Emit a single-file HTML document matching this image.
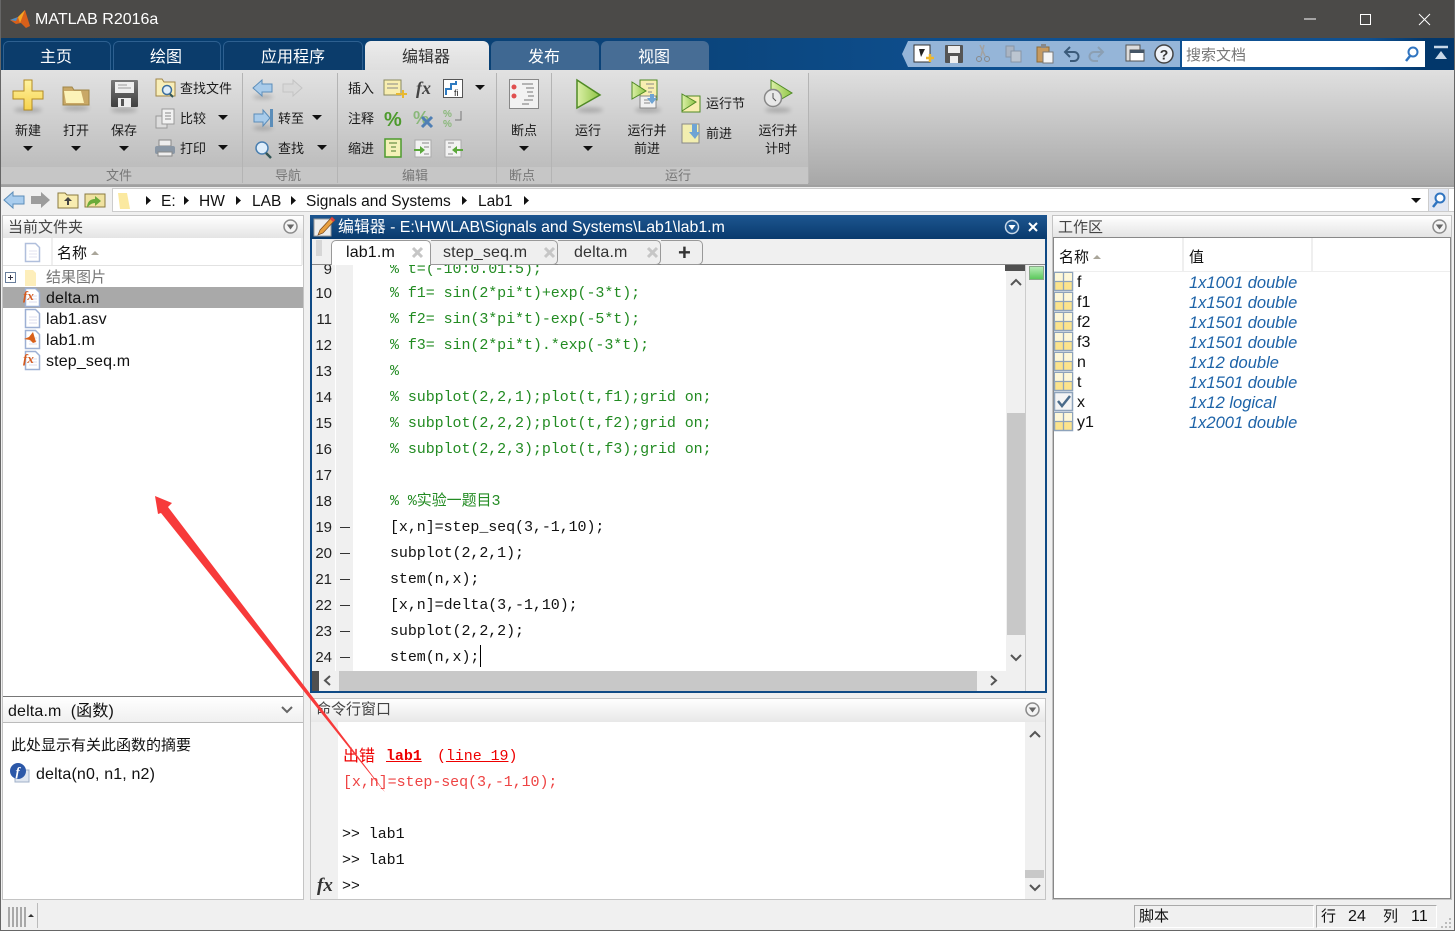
<!DOCTYPE html>
<html><head><meta charset="utf-8"><style>
html,body{margin:0;padding:0;width:1455px;height:931px;overflow:hidden;background:#f0f0f0}
body{position:relative;font-family:"Liberation Sans","Noto Sans CJK SC",sans-serif;font-size:15px;color:#111}
.b{position:absolute}
.t{position:absolute;white-space:nowrap;line-height:20px;margin-top:2px}
.r{font-size:13px;color:#1a1a1a;margin-top:1px}
.c{text-align:center}
.g{font-size:13px;color:#777;text-align:center;margin-top:1px}
.m{font-family:"Liberation Mono","Noto Sans CJK SC",monospace;font-size:15px;letter-spacing:-.07px;white-space:pre}
.cm{color:#228b22}
.n{left:312px;width:20px;text-align:right;color:#222;font-size:15px}
.d{left:340px;width:10px;height:1px;background:#333}
.v{left:1189px;font-style:italic;color:#1d63a8;font-size:16.5px}
.w{left:1077px;font-size:16px}
.f{font-size:16px;letter-spacing:.15px}
.tb{position:absolute;top:41px;height:29px;border-radius:6px 6px 0 0;box-sizing:border-box;box-shadow:inset 0 1px 0 #2e6090,inset 1px 0 0 #2e6090,inset -1px 0 0 #2e6090}
svg{position:absolute;left:0;top:0}
</style></head><body>
<!-- title -->
<div class="b" style="left:0;top:0;width:1455px;height:38px;background:#4b4a48"></div>
<div class="t" style="left:35px;top:8px;color:#fff;font-size:16px">MATLAB R2016a</div>
<!-- tab strip -->
<div class="b" style="left:0;top:38px;width:1455px;height:32px;background:linear-gradient(90deg,#063a69 0,#0a4379 45%,#0f5192 70%,#0f5192 94%,#02376b 98%)"></div>
<div class="tb" style="left:3px;width:108px;background:#0b3c6b"></div>
<div class="tb" style="left:113px;width:108px;background:#0b3c6b"></div>
<div class="tb" style="left:223px;width:140px;background:#0b3c6b"></div>
<div class="b" style="left:365px;top:41px;width:124px;height:29px;background:linear-gradient(#ececec,#dedede);border-radius:6px 6px 0 0"></div>
<div class="b" style="left:491px;top:41px;width:108px;height:29px;background:#3f6892;border-radius:6px 6px 0 0"></div>
<div class="b" style="left:601px;top:41px;width:108px;height:29px;background:#476d95;border-radius:6px 6px 0 0"></div>
<div class="t c" style="left:2px;width:108px;top:46px;color:#fff;font-size:16px">主页</div>
<div class="t c" style="left:112px;width:108px;top:46px;color:#fff;font-size:16px">绘图</div>
<div class="t c" style="left:223px;width:140px;top:46px;color:#fff;font-size:16px">应用程序</div>
<div class="t c" style="left:364px;width:124px;top:46px;color:#333;font-size:16px">编辑器</div>
<div class="t c" style="left:490px;width:108px;top:46px;color:#fff;font-size:16px">发布</div>
<div class="t c" style="left:600px;width:108px;top:46px;color:#fff;font-size:16px">视图</div>
<!-- quick access -->
<div class="b" style="top:41px;height:26px;left:902px;width:278px;background:#95b5d8;clip-path:polygon(0 50%,6px 0,100% 0,100% 100%,6px 100%)"></div>
<div class="b" style="left:1182px;top:41px;width:243px;height:26px;background:#fff"></div>
<div class="t" style="left:1186px;top:44px;color:#777;font-size:15px">搜索文档</div>
<!-- ribbon -->
<div class="b" style="left:0;top:70px;width:1455px;height:115px;background:linear-gradient(#e0e0e0,#a7a7a7)"></div>
<div class="b" style="left:0;top:70px;width:808px;height:97px;background:linear-gradient(#e2e2e2,#bdbdbd)"></div>
<div class="b" style="left:0;top:167px;width:808px;height:17px;background:#c6c6c6"></div>
<div class="b" style="left:242px;top:73px;width:1px;height:110px;background:#b4b4b4"></div>
<div class="b" style="left:337px;top:73px;width:1px;height:110px;background:#b4b4b4"></div>
<div class="b" style="left:496px;top:73px;width:1px;height:110px;background:#b4b4b4"></div>
<div class="b" style="left:551px;top:73px;width:1px;height:110px;background:#b4b4b4"></div>
<div class="b" style="left:808px;top:73px;width:1px;height:110px;background:#b4b4b4"></div>
<div class="t g" style="left:-1px;width:240px;top:165px">文件</div>
<div class="t g" style="left:241px;width:94px;top:165px">导航</div>
<div class="t g" style="left:336px;width:158px;top:165px">编辑</div>
<div class="t g" style="left:495px;width:54px;top:165px">断点</div>
<div class="t g" style="left:550px;width:256px;top:165px">运行</div>
<div class="t r c" style="left:8px;width:40px;top:120px">新建</div>
<div class="t r c" style="left:56px;width:40px;top:120px">打开</div>
<div class="t r c" style="left:104px;width:40px;top:120px">保存</div>
<div class="t r" style="left:180px;top:78px">查找文件</div>
<div class="t r" style="left:180px;top:108px">比较</div>
<div class="t r" style="left:180px;top:138px">打印</div>
<div class="t r" style="left:278px;top:108px">转至</div>
<div class="t r" style="left:278px;top:138px">查找</div>
<div class="t r" style="left:348px;top:78px">插入</div>
<div class="t r" style="left:348px;top:108px">注释</div>
<div class="t r" style="left:348px;top:138px">缩进</div>
<div class="t r c" style="left:504px;width:40px;top:120px">断点</div>
<div class="t r c" style="left:568px;width:40px;top:120px">运行</div>
<div class="t r" style="left:706px;top:93px">运行节</div>
<div class="t r" style="left:706px;top:123px">前进</div>
<div class="t r c" style="left:622px;width:50px;top:120px">运行并</div>
<div class="t r c" style="left:622px;width:50px;top:138px">前进</div>
<div class="t r c" style="left:753px;width:50px;top:120px">运行并</div>
<div class="t r c" style="left:753px;width:50px;top:138px">计时</div>
<!-- address -->
<div class="b" style="left:0;top:185px;width:1455px;height:2px;background:#a0a0a0"></div>
<div class="b" style="left:0;top:187px;width:1455px;height:27px;background:#f0f0f0"></div>
<div class="b" style="left:112px;top:188px;width:1343px;height:24px;background:#fff;border-top:1px solid #ccc;border-bottom:1px solid #ccc;box-sizing:border-box;border-left:1px solid #ccc"></div>
<div class="b" style="left:1428px;top:188px;width:21px;height:24px;background:#e2e7f2;border:1px solid #ccc;box-sizing:border-box"></div>
<div class="t" style="left:161px;top:190px;font-size:15.5px">E:</div>
<div class="t" style="left:199px;top:190px;font-size:15.5px">HW</div>
<div class="t" style="left:252px;top:190px;font-size:15.5px">LAB</div>
<div class="t" style="left:306px;top:190px;font-size:15.5px">Signals and Systems</div>
<div class="t" style="left:478px;top:190px;font-size:15.5px">Lab1</div>
<!-- left panel -->
<div class="b" style="left:2px;top:215px;width:302px;height:685px;background:#fff;border:1px solid #c4c4c4;box-sizing:border-box"></div>
<div class="b" style="left:3px;top:216px;width:300px;height:22px;background:linear-gradient(#fff,#e4e4e4)"></div>
<div class="t" style="left:8px;top:216px;color:#444">当前文件夹</div>
<div class="b" style="left:3px;top:265px;width:299px;height:1px;background:#e2e2e2"></div>
<div class="b" style="left:51px;top:238px;width:2px;height:27px;background:#efefef"></div>
<div class="b" style="left:301px;top:238px;width:2px;height:27px;background:#efefef"></div>
<div class="t" style="left:57px;top:242px">名称</div>
<div class="b" style="left:3px;top:287px;width:300px;height:21px;background:#a9a9a9"></div>
<div class="t" style="left:46px;top:266px;color:#777">结果图片</div>
<div class="t f" style="left:46px;top:287px">delta.m</div>
<div class="t f" style="left:46px;top:308px">lab1.asv</div>
<div class="t f" style="left:46px;top:329px">lab1.m</div>
<div class="t f" style="left:46px;top:350px">step_seq.m</div>
<!-- details -->
<div class="b" style="left:3px;top:696px;width:300px;height:1px;background:#777"></div>
<div class="b" style="left:3px;top:697px;width:300px;height:25px;background:linear-gradient(#fff,#f0f0f0);border-bottom:1px solid #bbb"></div>
<div class="t f" style="left:8px;top:700px">delta.m&nbsp; (函数)</div>
<div class="t" style="left:11px;top:734px;font-size:15px">此处显示有关此函数的摘要</div>
<div class="t f" style="left:36px;top:763px">delta(n0, n1, n2)</div>
<!-- editor -->
<div class="b" style="left:310px;top:215px;width:737px;height:478px;background:#fff;border:2px solid #0f4a85;box-sizing:border-box"></div>
<div class="b" style="left:310px;top:215px;width:737px;height:24px;background:linear-gradient(#1d5690,#093a6d)"></div>
<div class="t" style="left:338px;top:216px;color:#fff;font-size:15.9px">编辑器 - E:\HW\LAB\Signals and Systems\Lab1\lab1.m</div>
<div class="b" style="left:312px;top:239px;width:733px;height:26px;background:#f0f0f0;border-bottom:1px solid #888;box-sizing:border-box"></div>
<div class="b" style="left:331px;top:240px;width:100px;height:26px;background:#fff;border:1px solid #999;border-bottom:0;border-radius:5px 5px 0 0;box-sizing:border-box"></div>
<div class="b" style="left:431px;top:240px;width:127px;height:25px;background:#efefef;border:1px solid #999;border-left:0;border-radius:0 5px 5px 0;box-sizing:border-box"></div>
<div class="b" style="left:558px;top:240px;width:103px;height:25px;background:#efefef;border:1px solid #999;border-left:0;border-radius:0 5px 5px 0;box-sizing:border-box"></div>
<div class="b" style="left:661px;top:240px;width:42px;height:25px;background:#efefef;border:1px solid #999;border-left:0;border-radius:0 5px 5px 0;box-sizing:border-box"></div>
<div class="t f" style="left:346px;top:241px">lab1.m</div>
<div class="t f" style="left:443px;top:241px;color:#333">step_seq.m</div>
<div class="t f" style="left:574px;top:241px;color:#333">delta.m</div>
<div class="t" style="left:678px;top:241px;font-size:22px;font-weight:bold;color:#333">+</div>
<!-- gutter -->
<div class="b" style="left:312px;top:265px;width:23px;height:406px;background:#f0f0f0"></div>
<div class="b" style="left:336px;top:265px;width:17px;height:406px;background:#f0f0f0"></div>
<div class="b" style="left:312px;top:265px;width:700px;height:406px;overflow:hidden">
<div class="t m cm" style="left:78px;top:-7px">% t=(-10:0.01:5);</div>
<div class="t n" style="left:0;top:-7px">9</div>
</div>
<div class="t n" style="top:282px">10</div><div class="t n" style="top:308px">11</div><div class="t n" style="top:334px">12</div><div class="t n" style="top:360px">13</div><div class="t n" style="top:386px">14</div><div class="t n" style="top:412px">15</div><div class="t n" style="top:438px">16</div><div class="t n" style="top:464px">17</div><div class="t n" style="top:490px">18</div><div class="t n" style="top:516px">19</div><div class="t n" style="top:542px">20</div><div class="t n" style="top:568px">21</div><div class="t n" style="top:594px">22</div><div class="t n" style="top:620px">23</div><div class="t n" style="top:646px">24</div>
<div class="b d" style="top:527px"></div><div class="b d" style="top:553px"></div><div class="b d" style="top:579px"></div><div class="b d" style="top:605px"></div><div class="b d" style="top:631px"></div><div class="b d" style="top:657px"></div>
<div class="t m cm" style="left:390px;top:282px">% f1= sin(2*pi*t)+exp(-3*t);</div>
<div class="t m cm" style="left:390px;top:308px">% f2= sin(3*pi*t)-exp(-5*t);</div>
<div class="t m cm" style="left:390px;top:334px">% f3= sin(2*pi*t).*exp(-3*t);</div>
<div class="t m cm" style="left:390px;top:360px">%</div>
<div class="t m cm" style="left:390px;top:386px">% subplot(2,2,1);plot(t,f1);grid on;</div>
<div class="t m cm" style="left:390px;top:412px">% subplot(2,2,2);plot(t,f2);grid on;</div>
<div class="t m cm" style="left:390px;top:438px">% subplot(2,2,3);plot(t,f3);grid on;</div>
<div class="t m cm" style="left:390px;top:490px">% %实验一题目3</div>
<div class="t m" style="left:390px;top:516px">[x,n]=step_seq(3,-1,10);</div>
<div class="t m" style="left:390px;top:542px">subplot(2,2,1);</div>
<div class="t m" style="left:390px;top:568px">stem(n,x);</div>
<div class="t m" style="left:390px;top:594px">[x,n]=delta(3,-1,10);</div>
<div class="t m" style="left:390px;top:620px">subplot(2,2,2);</div>
<div class="t m" style="left:390px;top:646px">stem(n,x);</div>
<div class="b" style="left:480px;top:645px;width:1px;height:22px;background:#000"></div>
<!-- editor scrollbars -->
<div class="b" style="left:1006px;top:265px;width:19px;height:406px;background:#f0f0f0"></div>
<div class="b" style="left:1005px;top:265px;width:20px;height:6px;background:#505050"></div>
<div class="b" style="left:1007px;top:413px;width:18px;height:222px;background:#c8c8c8"></div>
<div class="b" style="left:1025px;top:265px;width:20px;height:426px;background:#f0f0f0;border-left:1px solid #ccc;box-sizing:border-box"></div>
<div class="b" style="left:1029px;top:266px;width:15px;height:14px;background:linear-gradient(#b6ecb6,#5cc85c);border:1px solid #8aa88a;box-sizing:border-box"></div>
<div class="b" style="left:312px;top:671px;width:713px;height:20px;background:#f0f0f0"></div>
<div class="b" style="left:312px;top:671px;width:7px;height:20px;background:#505050"></div>
<div class="b" style="left:339px;top:671px;width:638px;height:20px;background:#c8c8c8"></div>
<!-- command window -->
<div class="b" style="left:310px;top:698px;width:736px;height:202px;background:#fff;border:1px solid #c4c4c4;box-sizing:border-box"></div>
<div class="b" style="left:311px;top:699px;width:734px;height:23px;background:linear-gradient(#fff,#e8e8e8)"></div>
<div class="t" style="left:316px;top:698px;color:#444">命令行窗口</div>
<div class="b" style="left:311px;top:722px;width:27px;height:177px;background:#f0f0f0"></div>
<div class="b" style="left:1025px;top:722px;width:20px;height:177px;background:#f0f0f0"></div>
<div class="b" style="left:1025px;top:870px;width:19px;height:8px;background:#c8c8c8"></div>
<div class="t" style="left:343px;top:745px;color:#e00;font-size:16px">出错</div>
<div class="t m" style="left:386px;top:745px;color:#e00;font-weight:bold;text-decoration:underline">lab1</div>
<div class="t m" style="left:437px;top:745px;color:#e00">(<u>line 19</u>)</div>
<div class="t m" style="left:343px;top:771px;color:#e44">[x,n]=step-seq(3,-1,10);</div>
<div class="t m" style="left:342px;top:823px">&gt;&gt; lab1</div>
<div class="t m" style="left:342px;top:849px">&gt;&gt; lab1</div>
<div class="t m" style="left:342px;top:875px">&gt;&gt;</div>
<div class="t" style="left:317px;top:874px;font-family:'Liberation Serif',serif;font-style:italic;font-weight:bold;font-size:19px;color:#333">fx</div>
<!-- workspace -->
<div class="b" style="left:1052px;top:215px;width:400px;height:685px;background:#fff;border:1px solid #c4c4c4;box-sizing:border-box"></div>
<div class="b" style="left:1053px;top:216px;width:398px;height:22px;background:linear-gradient(#fff,#e4e4e4);border-bottom:1px solid #888;box-sizing:border-box"></div>
<div class="t" style="left:1058px;top:216px;color:#444">工作区</div>
<div class="b" style="left:1053px;top:238px;width:1px;height:661px;background:#888"></div>
<div class="b" style="left:1053px;top:898px;width:398px;height:1px;background:#888"></div>
<div class="b" style="left:1450px;top:238px;width:1px;height:661px;background:#888"></div>
<div class="b" style="left:1054px;top:271px;width:396px;height:1px;background:#eee"></div>
<div class="b" style="left:1182px;top:238px;width:2px;height:33px;background:#efefef"></div>
<div class="b" style="left:1311px;top:238px;width:2px;height:33px;background:#efefef"></div>
<div class="t" style="left:1059px;top:246px">名称</div>
<div class="t" style="left:1189px;top:246px">值</div>
<div class="t w" style="top:271px">f</div><div class="t v" style="top:271px">1x1001 double</div>
<div class="t w" style="top:291px">f1</div><div class="t v" style="top:291px">1x1501 double</div>
<div class="t w" style="top:311px">f2</div><div class="t v" style="top:311px">1x1501 double</div>
<div class="t w" style="top:331px">f3</div><div class="t v" style="top:331px">1x1501 double</div>
<div class="t w" style="top:351px">n</div><div class="t v" style="top:351px">1x12 double</div>
<div class="t w" style="top:371px">t</div><div class="t v" style="top:371px">1x1501 double</div>
<div class="t w" style="top:391px">x</div><div class="t v" style="top:391px">1x12 logical</div>
<div class="t w" style="top:411px">y1</div><div class="t v" style="top:411px">1x2001 double</div>
<!-- status -->
<div class="b" style="left:1134px;top:905px;width:180px;height:23px;border:1px solid #aaa;border-bottom-color:#fff;border-right-color:#fff;box-sizing:border-box"></div>
<div class="b" style="left:1316px;top:905px;width:121px;height:23px;border:1px solid #aaa;border-bottom-color:#fff;border-right-color:#fff;box-sizing:border-box"></div>
<div class="t" style="left:1139px;top:905px;font-size:15px">脚本</div>
<div class="t" style="left:1321px;top:905px;font-size:15px">行</div>
<div class="t f" style="left:1348px;top:905px">24</div>
<div class="t" style="left:1383px;top:905px;font-size:15px">列</div>
<div class="t f" style="left:1411px;top:905px">11</div>
<div class="b" style="left:0;top:930px;width:1455px;height:1px;background:#666"></div>
<div class="b" style="left:0;top:0;width:1px;height:931px;background:#666"></div>
<div class="b" style="left:1454px;top:0;width:1px;height:931px;background:#666"></div>
<div class="b" style="left:37px;top:903px;width:1px;height:25px;background:#bbb"></div>

<svg width="1455" height="931" viewBox="0 0 1455 931">
<defs>
<filter id="bl" x="-30%" y="-100%" width="160%" height="300%"><feGaussianBlur stdDeviation="2"/></filter>
<linearGradient id="gy" x1="0" y1="0" x2="0" y2="1"><stop offset="0" stop-color="#fff3a0"/><stop offset="1" stop-color="#f6d24e"/></linearGradient>
<linearGradient id="gr" x1="0" y1="0" x2="1" y2="0"><stop offset="0" stop-color="#dcf0a8"/><stop offset="1" stop-color="#8fc444"/></linearGradient>
<linearGradient id="gs" x1="0" y1="0" x2="0" y2="1"><stop offset="0" stop-color="#777"/><stop offset="1" stop-color="#3f3f3f"/></linearGradient>
<symbol id="dn" overflow="visible"><path d="M0 0h10l-5 5z" fill="#111"/></symbol>
<symbol id="rt" overflow="visible"><path d="M0 0l5 4.500-5 4.500z" fill="#111"/></symbol>
<symbol id="grid" overflow="visible"><rect x=".5" y=".5" width="18" height="18" fill="#fbe38c" stroke="#8ea3bb" stroke-width="1.500"/><rect x="1" y="1" width="17" height="8" fill="#fdf7d8"/><path d="M9.500 1v17M1 9.500h17" stroke="#8ea3bb" stroke-width="1.300"/></symbol>
<symbol id="menu" overflow="visible"><circle cx="7.500" cy="7.500" r="6.500" fill="#f4f4f4" stroke="#8a8a8a" stroke-width="1.500"/><path d="M3.800 5.500h7.400l-3.700 5z" fill="#666"/></symbol>
<symbol id="doc" overflow="visible"><path d="M.5.500h10l4 4v14h-14z" fill="#fff" stroke="#9db0d4" stroke-width="1.500"/><path d="M4 8h8M4 11h8M4 14h8" stroke="#dde"/></symbol>
<symbol id="x" overflow="visible"><path d="M1 1l9 9M10 1l-9 9" stroke="#c6c6c6" stroke-width="3"/></symbol>
</defs>
<!-- logo -->
<path d="M10 20l8-3 7-7 5 16-4 2-5-5-5 1z" fill="#d9601a"/><path d="M18 17l7-7-5 13z" fill="#f6a623"/><path d="M10 20l8-3-2 4z" fill="#4e8fc7"/>
<!-- window controls -->
<path d="M1304 19h12" stroke="#fff"/><rect x="1360.500" y="14.500" width="10" height="10" fill="none" stroke="#fff"/><path d="M1419 14l11 11M1430 14l-11 11" stroke="#fff"/>
<!-- shadows -->
<g fill="#000" opacity=".2" filter="url(#bl)"><ellipse cx="28" cy="110" rx="14" ry="2.500"/><ellipse cx="76" cy="108" rx="13" ry="2.500"/><ellipse cx="124" cy="110" rx="13" ry="2.500"/><ellipse cx="590" cy="110" rx="13" ry="2.500"/><ellipse cx="648" cy="110" rx="13" ry="2.500"/><ellipse cx="778" cy="110" rx="13" ry="2.500"/><ellipse cx="263" cy="97" rx="10" ry="2"/><ellipse cx="263" cy="128" rx="10" ry="2"/></g>
<!-- new -->
<path d="M24 80h8v11h11v8H32v11h-8V99H13v-8h11z" fill="url(#gy)" stroke="#b28a22"/>
<!-- open -->
<path d="M63 87h9l2 3h15v15H63z" fill="#c9a866" stroke="#a08648"/><path d="M64 91h17l3 12H66z" fill="#fcf3b8"/>
<!-- save -->
<rect x="111" y="80" width="27" height="27" rx="1" fill="url(#gs)"/><rect x="115" y="82" width="19" height="11" fill="#eee"/><path d="M118 85h9M118 88h13" stroke="#999"/><rect x="118" y="98" width="13" height="9" fill="#eee"/><rect x="121" y="99" width="3" height="7" fill="#555"/>
<use href="#dn" x="23" y="146"/><use href="#dn" x="71" y="146"/><use href="#dn" x="119" y="146"/>
<!-- find files -->
<path d="M156 79h6l2 3h11v14h-19z" fill="#f8eeb8" stroke="#a08648"/><circle cx="167" cy="90" r="4.500" fill="#dfeefb" stroke="#3d6f9e" stroke-width="1.500"/><path d="M170 94l3 3" stroke="#355" stroke-width="2"/>
<!-- compare -->
<rect x="156" y="116" width="11" height="12" fill="#ddd" stroke="#999"/><rect x="162" y="109" width="12" height="15" fill="#f2f2f2" stroke="#999"/><path d="M165 113h6M165 116h6M165 119h6" stroke="#888"/>
<!-- print -->
<rect x="159" y="140" width="12" height="6" fill="#eee" stroke="#888"/><rect x="155" y="146" width="20" height="8" rx="2" fill="#8a97a5"/><rect x="158" y="152" width="14" height="4" fill="#eee" stroke="#888"/>
<use href="#dn" x="218" y="115"/><use href="#dn" x="218" y="145"/>
<!-- nav -->
<path d="M253 88l9-8v4h10v8h-10v4z" fill="#a8cbea" stroke="#5b8db9"/><path d="M302 88l-9-8v4h-10v8h10v4z" fill="#d8d8d8" stroke="#c4c4c4"/>
<path d="M254 114h9v-4l7 8-7 8v-4h-9z" fill="#a8cbea" stroke="#5b8db9"/><rect x="270" y="109" width="3" height="18" fill="#5b8db9"/>
<circle cx="262" cy="148" r="6" fill="#dfeefb" stroke="#4a7fb0" stroke-width="1.500"/><path d="M266 153l5 5" stroke="#355" stroke-width="2.500"/>
<use href="#dn" x="312" y="115"/><use href="#dn" x="317" y="145"/>
<!-- edit icons -->
<rect x="384" y="80" width="17" height="15" fill="#f8eeb0" stroke="#8a8a60"/><path d="M387 84h11M387 88h11" stroke="#888"/><path d="M396 93h6v-3h2v3h3v2h-3v3h-2v-3h-6z" fill="#e8b830"/>
<text x="416" y="94" font-family="Liberation Serif,serif" font-style="italic" font-weight="bold" font-size="18" fill="#444">fx</text>
<rect x="443.500" y="79.500" width="19" height="18" fill="#fff" stroke="#555"/><path d="M446 95v-6h5v-5h5v-3" fill="none" stroke="#2f7bc0" stroke-width="2"/><text x="454" y="96" font-size="9" fill="#222">fi</text>
<use href="#dn" x="475" y="85"/>
<text x="384" y="126" font-size="20" font-weight="bold" fill="#4d9a2d">%</text>
<text x="413" y="124" font-size="18" font-weight="bold" fill="#8ab87a">%</text><path d="M422 117l10 10M432 117l-10 10" stroke="#4f7fb4" stroke-width="3"/>
<text x="443" y="117" font-size="10" font-weight="bold" fill="#8ab87a">%</text><text x="443" y="127" font-size="10" font-weight="bold" fill="#8ab87a">%</text><path d="M461 111v9h-6" fill="none" stroke="#777"/>
<rect x="385" y="139" width="16" height="18" fill="#f4f1b8" stroke="#4d9a2d" stroke-width="1.500"/><path d="M389 143h8M391 147h5M391 151h5" stroke="#4d7a2d"/>
<rect x="415" y="140" width="16" height="17" fill="#f2f2f2" stroke="#aaa"/><path d="M422 143h7M424 147h5M424 154h5" stroke="#888"/><path d="M414 149h6v-3l5 4-5 4v-3h-6z" fill="#5aa83a"/>
<rect x="445" y="140" width="16" height="17" fill="#f2f2f2" stroke="#aaa"/><path d="M448 143h6M448 147h3M448 154h5" stroke="#888"/><path d="M463 149h-6v-3l-5 4 5 4v-3h6z" fill="#5aa83a"/>
<!-- breakpoints -->
<rect x="509.500" y="79.500" width="29" height="29" fill="#f2f2f2" stroke="#888"/><circle cx="514" cy="87" r="2.500" fill="#e05050"/><circle cx="514" cy="96" r="2.500" fill="#e05050"/><path d="M522 84h11M526 88h8M527 92h6M528 96h6M524 100h9M522 104h7" stroke="#777"/>
<use href="#dn" x="519" y="146"/>
<!-- run -->
<path d="M577 80l23 15-23 13z" fill="url(#gr)" stroke="#4f8a25" stroke-width="1.500"/>
<use href="#dn" x="583" y="146"/>
<rect x="640" y="80" width="17" height="20" fill="#f8eeb0" stroke="#4f8a25"/><path d="M646 84h8M648 88h6M648 92h4" stroke="#888"/><rect x="640" y="96" width="16" height="12" fill="#f2f2f2" stroke="#888"/><path d="M644 100h8M644 103h6" stroke="#888"/><path d="M632 82l14 9-14 8z" fill="url(#gr)" stroke="#4f8a25"/><path d="M650 94h4v4h3l-5 6-5-6h3z" fill="#6fa4d4"/>
<rect x="682" y="96" width="18" height="16" fill="#f8eeb0" stroke="#4f8a25"/><path d="M682 94l14 8-14 9z" fill="url(#gr)" stroke="#4f8a25"/>
<rect x="682" y="124" width="17" height="19" fill="#f2eeb0" stroke="#888"/><path d="M692 124h5v8h3l-5 7-6-7h3z" fill="#6fa4d4"/>
<path d="M771 80l21 13-21 12z" fill="url(#gr)" stroke="#4f8a25"/><circle cx="773" cy="98" r="8.500" fill="#e8e8e8" stroke="#888" stroke-width="1.500"/><path d="M773 93v5l3 3" fill="none" stroke="#555"/>
<!-- QAT -->
<rect x="914" y="45" width="16" height="17" fill="#fff" stroke="#333"/><path d="M919 49h6l-4 8z" fill="#222"/><path d="M926 58h8M930 54v8" stroke="#edb72e" stroke-width="2.500"/>
<rect x="945" y="45" width="18" height="18" rx="1" fill="#555"/><rect x="948" y="46" width="12" height="7" fill="#eee"/><rect x="950" y="56" width="8" height="7" fill="#eee"/>
<path d="M984 45l-3 11M980 45l5 11" stroke="#a2a2a2" stroke-width="1.500"/><circle cx="979" cy="59" r="2.500" fill="none" stroke="#888"/><circle cx="987" cy="59" r="2.500" fill="none" stroke="#888"/>
<rect x="1006" y="46" width="8" height="11" fill="#aab4c2" stroke="#8795a6"/><rect x="1011" y="51" width="10" height="11" fill="#bcc5d0" stroke="#8795a6"/>
<rect x="1037" y="47" width="12" height="15" fill="#c69a60" stroke="#8a6a3a"/><rect x="1041" y="44" width="5" height="4" fill="#888"/><rect x="1043" y="52" width="10" height="11" fill="#f4f4f4" stroke="#777"/>
<path d="M1070 47l-5 5 5 5M1066 52h8a4.500 4.500 0 0 1 0 9h-4" fill="none" stroke="#3a5a7a" stroke-width="2"/>
<path d="M1098 47l5 5-5 5M1102 52h-8a4.500 4.500 0 0 0 0 9h4" fill="none" stroke="#8b9fb3" stroke-width="2"/>
<rect x="1126" y="45" width="14" height="16" fill="#ddd" stroke="#555"/><rect x="1130" y="50" width="14" height="11" fill="#fff" stroke="#555"/><rect x="1130" y="50" width="14" height="3" fill="#456"/>
<circle cx="1164" cy="54" r="9" fill="#eef2f8" stroke="#444" stroke-width="1.500"/><text x="1164" y="59.500" text-anchor="middle" font-size="14" font-weight="bold" fill="#333">?</text>
<circle cx="1413" cy="52" r="4.500" fill="#fff" stroke="#2f74c0" stroke-width="2"/><path d="M1410 56l-4 5" stroke="#2f74c0" stroke-width="2.500"/>
<path d="M1434 47h14" stroke="#c8d8e8" stroke-width="2.500"/><path d="M1435 59l6-8 6 8z" fill="#c8d8e8"/>
<!-- address icons -->
<path d="M4 200l9-8v4h11v8H13v4z" fill="#a9cdee" stroke="#5b8db9"/><path d="M50 200l-9-8v4H31v8h10v4z" fill="#9c9c9c"/>
<path d="M58 193h7l2 2h11v13H58z" fill="#f8ecb0" stroke="#8a7a40"/><path d="M68 197l4 4h-3v4h-2v-4h-3z" fill="#444"/>
<path d="M85 194h20v13H85z" fill="#f0e2a0" stroke="#8a7a40"/><path d="M87 208c0-6 3-9 8-9v-3l6 5-6 5v-3c-3 0-6 2-8 5z" fill="#6aab3a"/>
<path d="M118 193h9l3 16h-10z" fill="#fbe9a0"/>
<use href="#rt" x="146" y="196"/><use href="#rt" x="184" y="196"/><use href="#rt" x="236" y="196"/><use href="#rt" x="291" y="196"/><use href="#rt" x="462" y="196"/><use href="#rt" x="524" y="196"/>
<path d="M1411 198h10l-5 5z" fill="#111"/>
<circle cx="1440" cy="198" r="4.500" fill="#fff" stroke="#2f74c0" stroke-width="2"/><path d="M1437 202l-4 5" stroke="#2f74c0" stroke-width="2.500"/>
<!-- panel menus -->
<use href="#menu" x="283" y="219"/><use href="#menu" x="1432" y="219"/><use href="#menu" x="1025" y="702"/>
<circle cx="1012" cy="227" r="6.500" fill="#1d5690" stroke="#c8d8e8" stroke-width="1.500"/><path d="M1008.500 225h7l-3.500 5z" fill="#fff"/>
<path d="M1029 223l8 8M1037 223l-8 8" stroke="#fff" stroke-width="2"/>
<!-- editor title icon -->
<rect x="314" y="219" width="17" height="17" fill="#eee" stroke="#999"/><path d="M332 217l-12 13-2 5 5-2 12-13z" fill="#e8a040" stroke="#7a4a20" stroke-width=".7"/><path d="M332 217l3 3-2 2-3-3z" fill="#d44"/>
<path d="M316 241h6M316 243h6M316 245h6M316 247h6M316 249h6M316 251h6M316 253h6M316 255h6" stroke="#bbb"/>
<use href="#x" x="412" y="247"/><use href="#x" x="544" y="247"/><use href="#x" x="647" y="247"/>
<!-- sort arrows -->
<path d="M91 255h8l-4-4z" fill="#aaa69a"/><path d="M1093 259h8l-4-4z" fill="#aaa69a"/>
<!-- left files -->
<use href="#doc" x="25" y="243" opacity=".8"/>
<rect x="5.500" y="272.500" width="10" height="10" fill="#fff" stroke="#6a7f9c"/><path d="M8 277.500h5M10.500 275v5" stroke="#334"/>
<path d="M25 270h8l3 3v13H25z" fill="#fdeebb"/>
<use href="#doc" x="25" y="288"/><use href="#doc" x="25" y="309"/><use href="#doc" x="25" y="330"/><use href="#doc" x="25" y="351"/>
<text x="23" y="300" font-family="Liberation Serif,serif" font-style="italic" font-weight="bold" font-size="13" fill="#d65a1e">fx</text>
<text x="23" y="363" font-family="Liberation Serif,serif" font-style="italic" font-weight="bold" font-size="13" fill="#d65a1e">fx</text>
<path d="M24 339l5-2 4-5 3 10-3 1-3-3z" fill="#d9601a"/>
<!-- f icon -->
<rect x="15" y="770" width="14" height="12" fill="#dfe6f0" stroke="#a0b0c8"/><circle cx="18" cy="771" r="8" fill="#2c58a8"/><text x="15.500" y="776" font-family="Liberation Serif,serif" font-style="italic" font-weight="bold" font-size="13" fill="#fff">f</text>
<!-- chevrons -->
<path d="M282 707l5 5 5-5" fill="none" stroke="#666" stroke-width="2"/>
<path d="M1011 285l5-5 5 5M1011 655l5 5 5-5" fill="none" stroke="#555" stroke-width="2"/>
<path d="M330 676l-5 4.500 5 4.500M991 676l5 4.500-5 4.500" fill="none" stroke="#555" stroke-width="2"/>
<path d="M1030 737l5-5 5 5M1030 885l5 5 5-5" fill="none" stroke="#555" stroke-width="2"/>
<!-- workspace icons -->
<use href="#grid" x="1054" y="272"/><use href="#grid" x="1054" y="292"/><use href="#grid" x="1054" y="312"/><use href="#grid" x="1054" y="332"/><use href="#grid" x="1054" y="352"/><use href="#grid" x="1054" y="372"/><use href="#grid" x="1054" y="412"/>
<rect x="1054.500" y="392.500" width="18" height="18" fill="#f4f4f4" stroke="#8ea3bb" stroke-width="1.500"/><path d="M1058 401l4 5 8-10" fill="none" stroke="#4a6b8a" stroke-width="2.500"/>
<!-- status grip -->
<path d="M8 907h2v20H8zM12 907h2v20h-2zM16 907h2v20h-2zM20 907h2v20h-2zM24 907h2v20h-2z" fill="#a8a8a8"/><path d="M28 917h6l-3-3z" fill="#333"/>
<path d="M1449 928h2v-2h-2zM1445 928h2v-2h-2zM1441 928h2v-2h-2zM1449 924h2v-2h-2zM1445 924h2v-2h-2zM1449 920h2v-2h-2z" fill="#bbb"/>
<!-- red arrow -->
<path d="M155 496L172 503 168 507 385 792 383 790 161 513 158 514Z" fill="#f73a3a"/>
</svg>
</body></html>
